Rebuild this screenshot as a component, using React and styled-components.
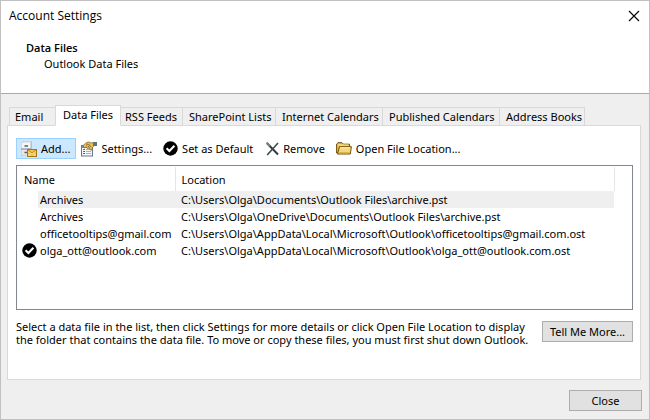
import React, { useState } from "react";
import styled, { createGlobalStyle } from "styled-components";

const Global = createGlobalStyle`
  * { box-sizing: border-box; }
  html, body, #root { height: 100%; }
  body {
    margin: 0;
    background: #fff;
    color: #000;
    font: 11px/13px "Noto Sans", "Open Sans", sans-serif;
  }
  button { font: inherit; color: inherit; white-space: nowrap; }
`;

const Dialog = styled.main`
  display: flex;
  flex-direction: column;
  min-height: 100%;
  background: #efefef;
  border: 1px solid #c0c0c0;
`;

const Header = styled.header`
  background: #fff;
  border-bottom: 1px solid #a9a9a9;
  padding-bottom: 23px;
`;

const TitleBar = styled.div`
  display: flex;
  align-items: center;
  justify-content: space-between;
  height: 30px;
  padding: 0 7px 0 8px;
`;

const Title = styled.h1`
  margin: 0;
  font-family: "Open Sans", "Noto Sans", sans-serif;
  font-size: 12px;
  line-height: 16px;
  font-weight: 400;
`;

const IconButton = styled.button`
  display: flex;
  padding: 2px;
  border: 0;
  background: none;
`;

const Heading = styled.h2`
  margin: 10px 0 3px 25px;
  font-family: "Open Sans", "Noto Sans", sans-serif;
  font-size: 11px;
  line-height: 13px;
  font-weight: 600;
`;

const SubHeading = styled.p`
  margin: 0 0 0 43px;
`;

const TabList = styled.div`
  display: flex;
  align-items: flex-end;
  height: 32px;
  padding-left: 8px;
  margin-bottom: -1px;
`;

const Tab = styled.button`
  flex: 0 0 ${(p) => p.$width}px;
  height: ${(p) => (p.$active ? 21 : 19)}px;
  margin-right: -1px;
  padding: 0 0 ${(p) => (p.$active ? 3 : 0)}px ${(p) => p.$inset}px;
  text-align: left;
  background: ${(p) => (p.$active ? "#fff" : "#efefef")};
  border: 1px solid #d9d9d9;
  border-bottom-color: ${(p) => (p.$active ? "#fff" : "#d9d9d9")};
  z-index: ${(p) => (p.$active ? 1 : 0)};
`;

const Panel = styled.section`
  flex: 1;
  display: flex;
  flex-direction: column;
  margin: 0 8px 0 6px;
  padding: 12px 7px 0 8px;
  background: #fff;
  border: 1px solid #d9d9d9;
`;

const Toolbar = styled.div`
  display: flex;
  margin-bottom: 6px;
`;

const Tool = styled.button`
  display: flex;
  align-items: center;
  gap: 4px;
  height: 21px;
  padding: 0 5px 0 4px;
  border: 1px solid ${(p) => (p.$active ? "#99d1ff" : "transparent")};
  background: ${(p) => (p.$active ? "#cce8ff" : "none")};
`;

const ListBox = styled.div`
  flex: 1;
  border: 1px solid #828790;
  padding-top: 1px;
`;

const Table = styled.table`
  width: 100%;
  table-layout: fixed;
  border-collapse: collapse;
`;

const Col = styled.col`
  width: ${(p) => (p.$width ? `${p.$width}px` : "auto")};
`;

const HeadCell = styled.th`
  height: 24px;
  padding: 0 0 0 ${(p) => p.$inset}px;
  font-weight: 400;
  text-align: left;
  border-right: 1px solid #e5e5e5;
`;

const Cell = styled.td`
  height: 17px;
  padding: 0 0 0 ${(p) => p.$inset || 0}px;
  white-space: nowrap;
  background: ${(p) => (p.$selected ? "#efefef" : "transparent")};
`;

const MarkCell = styled.td`
  padding: 0 0 0 5px;
  line-height: 0;
`;

const Footnote = styled.div`
  display: flex;
  align-items: flex-start;
  justify-content: space-between;
  height: 69px;
  padding-top: 11px;
`;

const Hint = styled.p`
  margin: -1px 0 0;
  max-width: 522px;
`;

const PushButton = styled.button`
  flex: 0 0 ${(p) => p.$width}px;
  height: 21px;
  padding: 0;
  background: #e1e1e1;
  border: 1px solid #adadad;
`;

const Footer = styled.footer`
  display: flex;
  justify-content: flex-end;
  padding: 10px 7px 8px;
`;

const CloseIcon = () => (
  <svg width="12" height="12" viewBox="0 0 12 12" aria-hidden="true">
    <path d="M1 1L11 11M11 1L1 11" stroke="#000" strokeWidth="1.1" />
  </svg>
);

const CheckIcon = () => (
  <svg width="15" height="15" viewBox="0 0 15 15" aria-hidden="true">
    <circle cx="7.5" cy="7.5" r="7.2" fill="#000" />
    <path d="M3.6 7.2L6.4 10L11.4 4.8" fill="none" stroke="#fff" strokeWidth="2.1" />
  </svg>
);

const CabinetIcon = () => (
  <svg width="16" height="16" viewBox="0 0 16 16" aria-hidden="true">
    <path d="M0 2L2.5 0H11V14L9.5 15H0Z" fill="#b9bec5" />
    <path d="M.5 2L3 .5H10.5L9.5 2Z" fill="#e4e7ea" />
    <rect x=".5" y="2" width="9" height="5.5" fill="#f5f5f5" />
    <rect x=".5" y="8.5" width="9" height="6" fill="#e6e7ea" />
    <path d="M0 8H10" stroke="#8e959f" />
    <path d="M3.5 5H7M3.5 11.5H6" stroke="#555e6b" strokeWidth="1.4" />
    <rect x="6.5" y="8.5" width="9" height="7" fill="#f6c54a" stroke="#a77417" />
    <path d="M7 9.6L11 12.8L15 9.6M7.5 15L9.6 12.8M14.5 15L12.4 12.8" fill="none" stroke="#fff0a8" />
    <path d="M7 9L11 12L15 9" fill="none" stroke="#a66d12" strokeWidth=".8" />
  </svg>
);

const SettingsIcon = () => (
  <svg width="16" height="16" viewBox="0 0 16 16" aria-hidden="true">
    <rect x=".5" y="4.5" width="11" height="10.5" fill="#f4f8fc" stroke="#65798e" />
    <path d="M1 4.5H11V7H1Z" fill="#758fac" />
    <path d="M2.2 8.5H4M2.2 10.5H4M2.2 12.5H4" stroke="#2d5f96" />
    <path d="M5 8.5H10M5 10.5H10M5 12.5H10" stroke="#a2b3c5" />
    <path d="M2 4.5L5.5 1.5L8 1L10 2L12.5 1.5V5.5L11.5 6.5L11 9L9.5 9L8 7L6.5 7.5L5.5 6L3 7Z" fill="#e5bd58" stroke="#806020" strokeWidth=".7" />
    <path d="M5 4.5L7 2.8L10 6M7 5L8.5 6.5" fill="none" stroke="#715319" strokeWidth=".8" />
    <path d="M12 1H16V5H12Z" fill="#527d75" />
  </svg>
);

const RemoveIcon = () => (
  <svg width="15" height="14" viewBox="-2 0 15 14" aria-hidden="true">
    <path d="M1 1.2L12 12.5" stroke="#343b41" strokeWidth="2" />
    <path d="M12 1L1.2 13" stroke="#41484e" strokeWidth="1.6" />
    <path d="M.5 .5L4 4" stroke="#7b8389" strokeWidth="2" />
  </svg>
);

const FolderIcon = () => (
  <svg width="16" height="13" viewBox="0 0 16 13" aria-hidden="true">
    <path d="M.6 11V2L2 .7H6L7.5 2.2H13.5V11Z" fill="#e6bd4c" stroke="#704f0d" />
    <path d="M2 3H12.5" stroke="#fff0a0" />
    <path d="M1.5 12L3.5 4.7H15.4L14.3 12Z" fill="#f5d978" stroke="#73510b" />
    <path d="M4 5.8H14" stroke="#fff6be" />
    <path d="M3 10.8H13.7" stroke="#d8a72f" />
  </svg>
);

const tabs = [
  { label: "Email", width: 47, inset: 5 },
  { label: "Data Files", width: 66, inset: 7 },
  { label: "RSS Feeds", width: 63, inset: 4 },
  { label: "SharePoint Lists", width: 94, inset: 6 },
  { label: "Internet Calendars", width: 108, inset: 6 },
  { label: "Published Calendars", width: 118, inset: 6 },
  { label: "Address Books", width: 86, inset: 6 },
];

const tools = [
  { label: "Add...", Icon: CabinetIcon },
  { label: "Settings...", Icon: SettingsIcon },
  { label: "Set as Default", Icon: CheckIcon },
  { label: "Remove", Icon: RemoveIcon },
  { label: "Open File Location...", Icon: FolderIcon },
];

const files = [
  ["Archives", "C:\\Users\\Olga\\Documents\\Outlook Files\\archive.pst"],
  ["Archives", "C:\\Users\\Olga\\OneDrive\\Documents\\Outlook Files\\archive.pst"],
  ["officetooltips@gmail.com", "C:\\Users\\Olga\\AppData\\Local\\Microsoft\\Outlook\\officetooltips@gmail.com.ost"],
  ["olga_ott@outlook.com", "C:\\Users\\Olga\\AppData\\Local\\Microsoft\\Outlook\\olga_ott@outlook.com.ost"],
];

export default function App() {
  const [tab, setTab] = useState("Data Files");
  const [selected, setSelected] = useState(0);
  const defaultFile = 3;

  return (
    <>
      <Global />
      <Dialog>
        <Header>
          <TitleBar>
            <Title>Account Settings</Title>
            <IconButton aria-label="Close window"><CloseIcon /></IconButton>
          </TitleBar>
          <Heading>Data Files</Heading>
          <SubHeading>Outlook Data Files</SubHeading>
        </Header>
        <TabList role="tablist">
          {tabs.map((t) => (
            <Tab
              key={t.label}
              role="tab"
              aria-selected={t.label === tab}
              $active={t.label === tab}
              $width={t.width}
              $inset={t.inset}
              onClick={() => setTab(t.label)}
            >
              {t.label}
            </Tab>
          ))}
        </TabList>
        <Panel role="tabpanel">
          <Toolbar role="toolbar">
            {tools.map(({ label, Icon }, i) => (
              <Tool key={label} $active={i === 0}>
                <Icon />
                {label}
              </Tool>
            ))}
          </Toolbar>
          <ListBox>
            <Table>
              <colgroup>
                <Col $width={21} />
                <Col $width={137} />
                <Col />
                <Col $width={18} />
              </colgroup>
              <thead>
                <tr>
                  <HeadCell colSpan={2} $inset={7}>Name</HeadCell>
                  <HeadCell $inset={6}>Location</HeadCell>
                  <td />
                </tr>
              </thead>
              <tbody>
                {files.map(([name, location], i) => (
                  <tr key={location} onClick={() => setSelected(i)}>
                    <MarkCell>{i === defaultFile && <CheckIcon />}</MarkCell>
                    <Cell $inset={2} $selected={i === selected}>{name}</Cell>
                    <Cell $inset={6} $selected={i === selected}>{location}</Cell>
                    <td />
                  </tr>
                ))}
              </tbody>
            </Table>
          </ListBox>
          <Footnote>
            <Hint>
              Select a data file in the list, then click Settings for more details or click Open File Location to display
              the folder that contains the data file. To move or copy these files, you must first shut down Outlook.
            </Hint>
            <PushButton $width={91}>Tell Me More...</PushButton>
          </Footnote>
        </Panel>
        <Footer>
          <PushButton $width={73}>Close</PushButton>
        </Footer>
      </Dialog>
    </>
  );
}
